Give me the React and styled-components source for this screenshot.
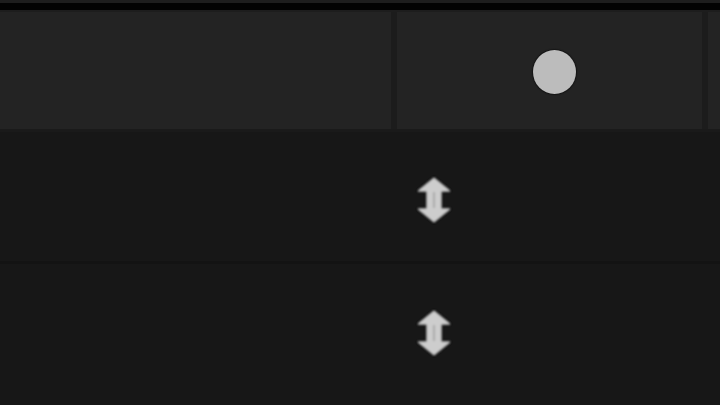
import React from "react";
import styled, { createGlobalStyle } from "styled-components";

const Global = createGlobalStyle`
  html, body { margin: 0; padding: 0; background: #171717; overflow: hidden; }
  body { font-family: "Liberation Sans", Arial, sans-serif; }
`;

const Page = styled.div`
  width: 720px;
  height: 405px;
  display: flex;
  flex-direction: column;
  background: #171717;
`;

const TopEdge = styled.div`
  height: 3px;
  background: #1e1e1e;
`;

const BlackBar = styled.div`
  height: 7px;
  background: #030303;
`;

const Header = styled.div`
  height: 118px;
  display: flex;
  border-top: 2px solid #1d1d1d;
  border-bottom: 3px solid #1a1a1a;
  background: #1c1c1c;
`;

const HeadCell = styled.div`
  width: ${(p) => (p.$w ? `${p.$w}px` : "auto")};
  flex: ${(p) => (p.$w ? "none" : "1")};
  background: #232323;
  display: flex;
  align-items: center;
  justify-content: center;
  margin-right: ${(p) => p.$gap || 0}px;
`;

const Dot = styled.div`
  width: 43px;
  height: 44px;
  border-radius: 50%;
  background: #bcbcbc;
  box-shadow: 0 0 1px 1px #151515;
  margin-left: 10px;
  margin-top: 2px;
`;

const Row = styled.div`
  height: ${(p) => p.$h}px;
  background: #171717;
  display: flex;
  align-items: center;
  border-bottom: ${(p) => (p.$line ? "3px solid #131313" : "none")};
  padding-left: 415px;
  box-sizing: border-box;
`;

const Arrow = ({ dy = 0 }) => (
  <svg width="38" height="50" viewBox="0 0 38 50" style={{ marginTop: dy }}>
    <defs>
      <filter id="b" x="-20%" y="-20%" width="140%" height="140%">
        <feGaussianBlur stdDeviation="0.8" />
      </filter>
    </defs>
    <g filter="url(#b)">
      <path
        d="M19 2 L35 15 Q37 17 34 17 L27 17 L27 33 L34 33 Q37 33 35 35 L19 48 L3 35 Q1 33 4 33 L11 33 L11 17 L4 17 Q1 17 3 15 Z"
        fill="#cdcdcd"
        stroke="#0e0e0e"
        strokeWidth="1.2"
        strokeLinejoin="round"
      />
      <path d="M19 17 L19 33" stroke="#a9a9a9" strokeWidth="2" />
    </g>
  </svg>
);

export default function App() {
  return (
    <>
      <Global />
      <Page>
        <TopEdge />
        <BlackBar />
        <Header>
          <HeadCell $w={391} $gap={6} />
          <HeadCell $w={305} $gap={6}>
            <Dot />
          </HeadCell>
          <HeadCell />
        </Header>
        <Row $h={132} $line>
          <Arrow dy={6} />
        </Row>
        <Row $h={142}>
          <Arrow dy={-2} />
        </Row>
      </Page>
    </>
  );
}
